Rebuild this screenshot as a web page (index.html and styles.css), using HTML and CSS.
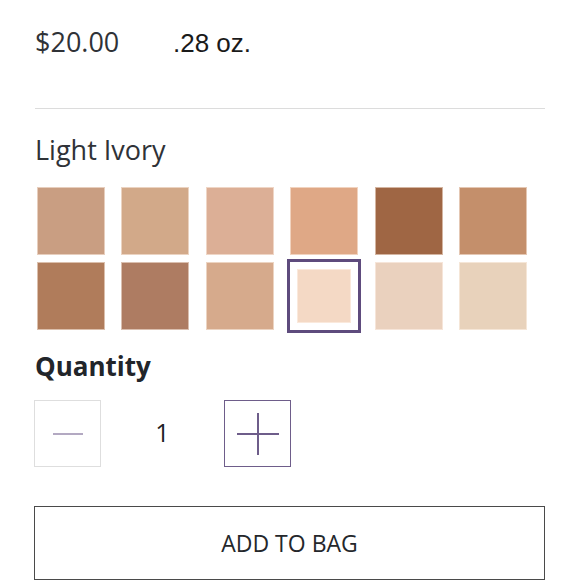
FILE: index.html
```html
<!DOCTYPE html>
<html>
<head>
<meta charset="utf-8">
<link rel="stylesheet" href="styles.css">
</head>
<body>
<div class="product">
  <div class="price-row">
    <span class="price">$20.00</span>
    <span class="size">.28 oz.</span>
  </div>
  <hr class="divider">
  <div class="shade-name">Light Ivory</div>
  <div class="swatches">
    <button class="swatch"><span style="background:#c99e82"></span></button>
    <button class="swatch"><span style="background:#d2a989"></span></button>
    <button class="swatch"><span style="background:#dcaf96"></span></button>
    <button class="swatch"><span style="background:#dfa886"></span></button>
    <button class="swatch"><span style="background:#9f6644"></span></button>
    <button class="swatch"><span style="background:#c48f6b"></span></button>
    <button class="swatch"><span style="background:#b07c5b"></span></button>
    <button class="swatch"><span style="background:#ae7c62"></span></button>
    <button class="swatch"><span style="background:#d6aa8c"></span></button>
    <button class="swatch selected"><span style="background:#f4d9c5"></span></button>
    <button class="swatch"><span style="background:#ead1be"></span></button>
    <button class="swatch"><span style="background:#e8d2bb"></span></button>
  </div>
  <div class="qty-label">Quantity</div>
  <div class="qty-row">
    <button class="qty-btn minus" aria-label="Decrease">
      <svg width="30" height="2" viewBox="0 0 30 2"><rect x="0" y="0" width="30" height="2" fill="#b3a9c2"/></svg>
    </button>
    <div class="qty-value">1</div>
    <button class="qty-btn plus" aria-label="Increase">
      <svg width="42" height="42" viewBox="0 0 42 42"><rect x="0" y="20" width="42" height="2" fill="#6e5d8a"/><rect x="20" y="0" width="2" height="42" fill="#6e5d8a"/></svg>
    </button>
  </div>
  <button class="add-btn">ADD TO BAG</button>
</div>
</body>
</html>
```
FILE: styles.css
```css
html, body {
  margin: 0;
  padding: 0;
  background: #ffffff;
}

.product {
  padding: 26px 34px 0 34px;
  font-family: "Open Sans", "Noto Sans", sans-serif;
  color: #2b2e33;
}

.price-row {
  display: flex;
  align-items: baseline;
  height: 32px;
  line-height: 32px;
  padding-left: 1px;
}

.price {
  font-size: 27px;
  color: #2f3237;
  width: 138px;
}

.size {
  font-family: "Liberation Sans", Arial, sans-serif;
  font-size: 26px;
  color: #1a1a1a;
}

.divider {
  border: 0;
  border-top: 1px solid #dcdcdc;
  margin: 50px 0 0 1px;
  height: 0;
}

.shade-name {
  margin-top: 25px;
  font-size: 27px;
  line-height: 32px;
  padding-left: 1px;
  color: #2f3237;
}

.swatches {
  margin-top: 18px;
  display: grid;
  grid-template-columns: repeat(6, 74px);
  column-gap: 10.4px;
  row-gap: 1px;
}

.swatch {
  width: 74px;
  height: 74px;
  box-sizing: border-box;
  border: 3px solid transparent;
  padding: 0;
  margin: 0;
  background: #fff;
  cursor: pointer;
}

.swatch span {
  display: block;
  width: 100%;
  height: 100%;
  box-shadow: inset 0 0 0 1px rgba(255, 245, 238, 0.55);
}

.swatch.selected {
  border-color: #5e4b7d;
  padding: 7px;
}

.qty-label {
  margin-top: 18px;
  font-size: 26px;
  font-weight: 700;
  line-height: 30px;
  padding-left: 1px;
  color: #22252a;
}

.qty-row {
  margin-top: 19px;
  display: flex;
  align-items: center;
}

.qty-btn {
  width: 67px;
  height: 67px;
  box-sizing: border-box;
  background: #fff;
  padding: 0;
  margin: 0;
  display: flex;
  align-items: center;
  justify-content: center;
}

.qty-btn.minus {
  border: 1px solid #dedede;
}

.qty-btn.plus {
  border: 1px solid #6e5d8a;
}

.qty-value {
  width: 123px;
  text-align: center;
  font-size: 25px;
  line-height: 30px;
  padding-bottom: 4px;
  color: #1f2226;
}

.add-btn {
  display: block;
  margin-top: 39px;
  width: 511px;
  height: 74px;
  box-sizing: border-box;
  border: 1px solid #4a4a4a;
  background: #fff;
  font-family: "Open Sans", "Noto Sans", sans-serif;
  font-size: 23px;
  color: #24272b;
  padding: 0;
}
```
